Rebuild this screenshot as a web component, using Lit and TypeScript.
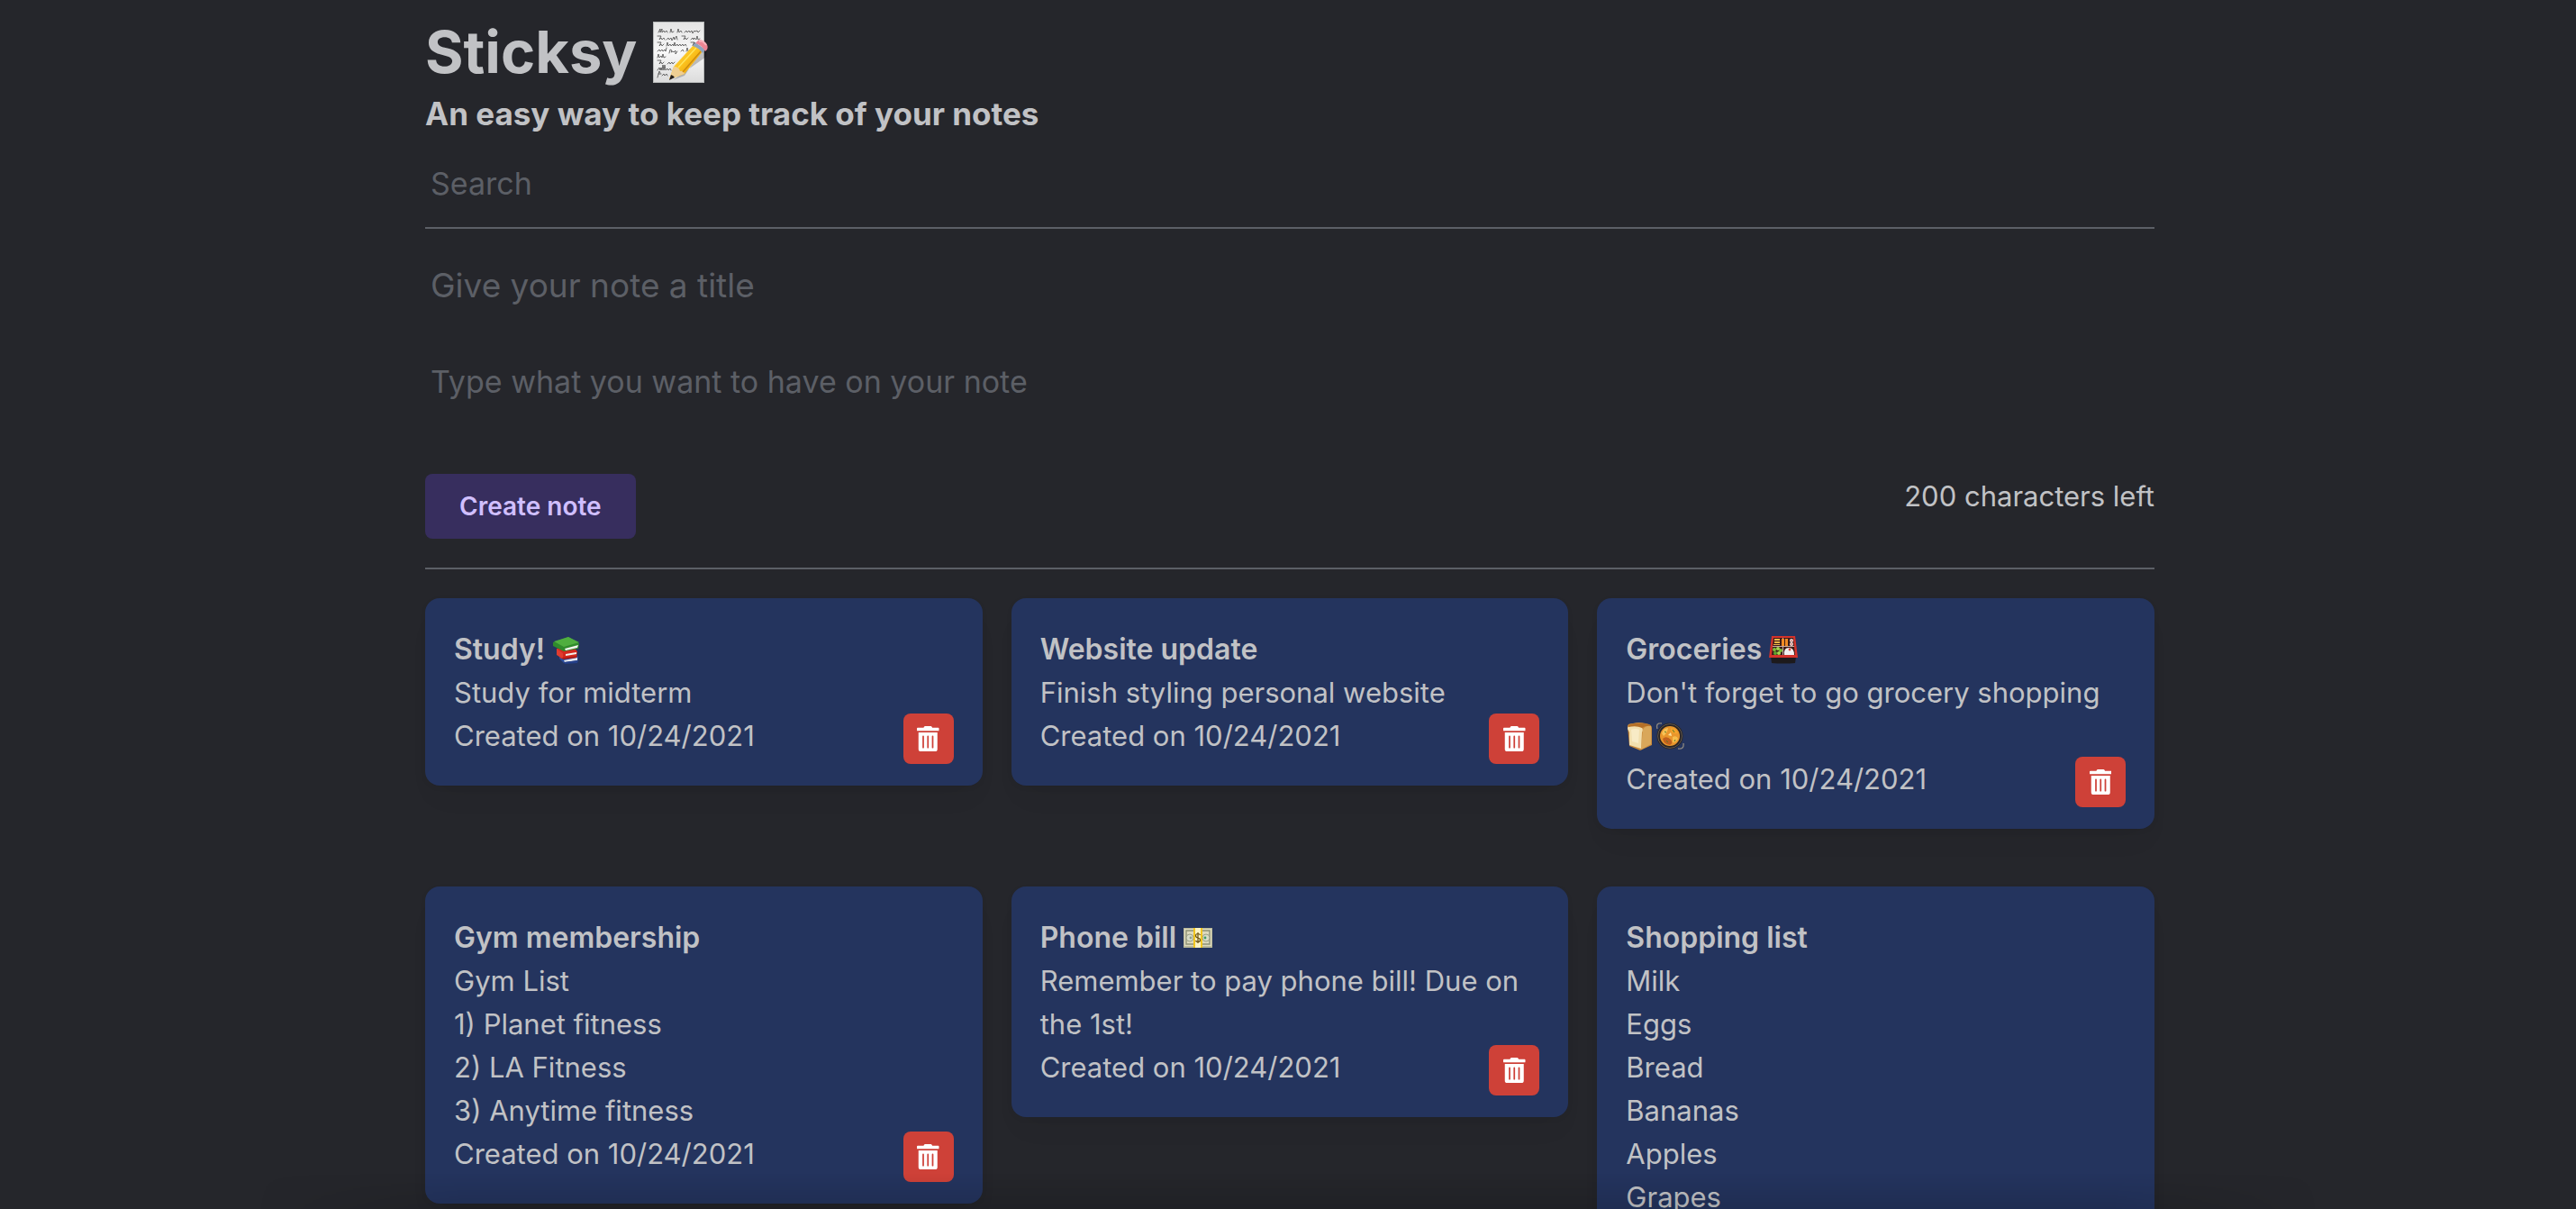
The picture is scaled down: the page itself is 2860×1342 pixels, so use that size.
import { LitElement, html, css, svg, nothing } from "lit";
import { customElement, property, state } from "lit/decorators.js";

interface Note {
  id: number;
  title: string;
  titleIcon?: string;
  lines: string[];
  lineIcons?: string[];
  date: string;
}

const MAX_LENGTH = 200;

const NOTES: Note[] = [
  { id: 1, title: "Study!", titleIcon: "books", lines: ["Study for midterm"], date: "10/24/2021" },
  { id: 2, title: "Website update", lines: ["Finish styling personal website"], date: "10/24/2021" },
  {
    id: 3,
    title: "Groceries",
    titleIcon: "bento",
    lines: ["Don't forget to go grocery shopping"],
    lineIcons: ["bread", "stew"],
    date: "10/24/2021",
  },
  {
    id: 4,
    title: "Gym membership",
    lines: ["Gym List", "1) Planet fitness", "2) LA Fitness", "3) Anytime fitness"],
    date: "10/24/2021",
  },
  {
    id: 5,
    title: "Phone bill",
    titleIcon: "money",
    lines: ["Remember to pay phone bill! Due on the 1st!"],
    date: "10/24/2021",
  },
  {
    id: 6,
    title: "Shopping list",
    lines: ["Milk", "Eggs", "Bread", "Bananas", "Apples", "Grapes"],
    date: "10/24/2021",
  },
];

const PICTURES: Record<string, unknown> = {
  books: svg`
    <path d="M8 20 L22 17 L29 24 L28 30 L13 31 L8 26Z" fill="#2b4c9c"/>
    <path d="M13 28 L28 25 L28 28 L14 30Z" fill="#e6e8ee"/>
    <path d="M13 30 L29 28 L28 31 L14 32Z" fill="#243f88"/>
    <path d="M5 15 L22 12 L28 18 L27 25 L10 26 L5 21Z" fill="#d3291f"/>
    <path d="M5 15 L12 20 L12 26 L5 22Z" fill="#e03c30"/>
    <path d="M15 21 L27 19 L27 21 L15 23Z" fill="#f4f1ec"/>
    <path d="M11 25 L28 23 L27 25 L12 27Z" fill="#b31c15"/>
    <path d="M1 8 L18 2 L30 9 L29 15 L13 18 L1 12Z" fill="#2f8a2c"/>
    <path d="M2 7 L18 2 L30 8 L13 13Z" fill="#4fae3f"/>
    <path d="M14 15 L29 11 L28 14 L15 17Z" fill="#f3f4ee"/>`,
  bento: svg`
    <path d="M2 24H30L29 31Q16 32 3 31Z" fill="#1d1a1c"/>
    <path d="M3 1H29L32 25H0Z" fill="#d4322a"/>
    <path d="M5 3H27L29 22H3Z" fill="#3a1c18"/>
    <path d="M15 3H16V22H15ZM4 12H28V13H4Z" fill="#c9a9a0"/>
    <path d="M6 4H12V6H6ZM6 7H12V9H6ZM5 10H12V11H5Z" fill="#f0b648"/>
    <path d="M14 4H17V12H14ZM18 4H21V12H18Z" fill="#f08a24"/>
    <circle cx="25" cy="6" r="2" fill="#f2dede"/><circle cx="25" cy="10" r="2" fill="#f2dede"/>
    <circle cx="25" cy="6" r=".8" fill="#c8574a"/><circle cx="25" cy="10" r=".8" fill="#c8574a"/>
    <circle cx="6" cy="16" r="2" fill="#7fc03a"/><circle cx="10" cy="15" r="2" fill="#a4d64d"/>
    <circle cx="13" cy="17" r="2" fill="#7fc03a"/><circle cx="7" cy="20" r="2" fill="#5fa32e"/>
    <circle cx="11" cy="20" r="2" fill="#a4d64d"/>
    <path d="M17 22Q16 14 22 14Q28 14 28 22Z" fill="#f3f1f1"/>
    <circle cx="23" cy="16" r="1.4" fill="#d9463c"/>`,
  bread: svg`
    <path d="M2 5Q2 2 8 2Q14 0 22 2Q29 3 29 7V26L16 32L4 27Z" fill="#c98a3c"/>
    <path d="M19 9Q22 4 28 5L28 25L17 31Z" fill="#d9a75a"/>
    <path d="M2 8Q2 4 7 5Q12 4 17 6Q20 8 18 12L17 30L4 26L4 12Z" fill="#f2dfae"/>
    <path d="M3 4Q9 1 20 2Q27 3 28 5Q22 4 18 7Q12 4 3 6Z" fill="#b46f27"/>
    <path d="M6 9Q11 7 15 9L14 24L7 22Z" fill="#f8ebc6"/>`,
  stew: svg`
    <path d="M2 8Q0 1 7 2M25 30Q32 31 31 24" fill="none" stroke="#8a857f" stroke-width="1.4"/>
    <circle cx="16" cy="16" r="14.5" fill="#2a2523"/>
    <circle cx="16" cy="16" r="13.4" fill="none" stroke="#6a6159" stroke-width=".8"/>
    <circle cx="16" cy="16" r="11" fill="#e9962c"/>
    <path d="M7 13Q9 7 14 7Q13 13 9 16Z" fill="#f8c256"/>
    <path d="M17 7Q24 7 25 13Q20 14 17 11Z" fill="#f4a32b"/>
    <path d="M8 19Q12 15 17 20Q20 24 16 26Q9 25 8 19Z" fill="#c0601f"/>
    <path d="M19 17Q24 15 25 19Q23 24 19 23Z" fill="#f7bd4a"/>
    <path d="M14 15L17 12L18 16Z" fill="#fbe3a0"/>
    <path d="M19 9L21 12M12 21L14 23M22 20L21 22M10 11L12 12" stroke="#5c7a26" stroke-width="1"/>`,
  money: svg`
    <path d="M0 5H32V27H0Z" fill="#b9b899"/>
    <path d="M1 6H31V25H1Z" fill="#dcd9bd"/>
    <path d="M3 8H29V23H3Z" fill="none" stroke="#8d9175" stroke-width="1.4"/>
    <circle cx="7" cy="16" r="4" fill="#d8dcc8" stroke="#9aa086"/>
    <circle cx="25" cy="16" r="4" fill="#d8dcc8" stroke="#9aa086"/>
    <circle cx="8" cy="16" r="1.4" fill="#8fa08a"/><circle cx="24" cy="16" r="1.4" fill="#3f9a66"/>
    <path d="M11 5H21V27H11Z" fill="#f2c61f"/>
    <path d="M13 5H19V27H13Z" fill="#fbf3c3"/>
    <path d="M18.5 13Q18 11.5 16 11.5Q13.500 11.500 13.500 13.500Q13.500 15.500 16 16Q18.500 16.500 18.500 18.500Q18.500 20.500 16 20.500Q14 20.500 13.500 19M16 10V22" fill="none" stroke="#6b5312" stroke-width="1.2"/>`,
  memo: svg`
    <defs>
      <linearGradient id="paper" x1="0" y1="0" x2="0" y2="1">
        <stop offset="0" stop-color="#e4e4e4"/><stop offset=".5" stop-color="#f8f8f8"/><stop offset="1" stop-color="#dcdcdc"/>
      </linearGradient>
      <linearGradient id="pencil" x1="0" y1="0" x2="1" y2="1">
        <stop offset="0" stop-color="#ffe04a"/><stop offset=".5" stop-color="#fbc01c"/><stop offset="1" stop-color="#d98a06"/>
      </linearGradient>
    </defs>
    <rect x="2" y="0" width="57" height="68" fill="#b9bbbb"/>
    <rect x="3" y="1" width="55" height="66" fill="url(#paper)"/>
    <g fill="none" stroke="#4a4a4a" stroke-width=".8" stroke-linecap="round" stroke-linejoin="round">
      <path d="M8 12l2-4 0 4 2-4 0 4 2-2 1 2 2-2 1 2 M21 12l1-4 1 4 2-1 M29 12l1-4 1 4 2-2 1 2 M37 12l2-2 1 2 2-2 1 2 2-2 1 3 2-3 1 1 2-1 1 2 2-2"/>
      <path d="M7 16h4l-2 4 2-2 1 2 2-2 1 2 M17 20l2-2 1 2 2-2 1 3 2-4 1 3 2-4 1 4 M34 16h4l-2 4 2-2 1 2 2-2 M44 20l2-2 1 2 1-2 2 2 1-4 1 4 2-1"/>
      <path d="M7 23h4l-2 4 2-2 1 2 2-2 M17 27l1-4 1 4 2-2 1 2 2-2 1 2 1-4 1 4 2-2 1 2 2-2 1 2 2-2 1 2 2-2 1 2 M44 23h4l-2 4 2-4 1 4"/>
      <path d="M7 33l2-2 1 2 2-2 1 2 2-2 1 2 1-4 M20 35l1-4 2 1-1 2 2-1 1 1 2-2 0 4 2-3 M33 33l2-2 1 2 M39 33l1-4 1 4 2-2"/>
      <path d="M7 40l1-4 1 4 2-2 1 2 1-4 1 4 2-1"/>
      <path d="M7 43h4l-2 4 2-2 1 2 2-2 M18 47l2-2 1 2 2-2 1 2 2-2 M30 47l2-2 1 2 1-2"/>
      <path d="M7 54l2-3 1 3 1-3 1 3 1-6 1 6 1-6 1 6 2-2 1 2 2-2 1 2"/>
      <path d="M7 62l2-7 1 2 M8 58h3 M12 60l2-2 1 2 2-2 1 2"/>
    </g>
    <path d="M24 65L61 39L62 29L59 27L37 60L21 66Z" fill="#000" opacity=".22"/>
    <path d="M25 50L47 26L57 33L37 58L20 64Z" fill="url(#pencil)"/>
    <path d="M25 50L20 64L37 58Q36 54 32 55Q31 50 25 50Z" fill="#efcf93"/>
    <path d="M22 59L20 65L26 62Q25 60 22 59Z" fill="#26211f"/>
    <path d="M30 51L50 29" stroke="#ffe55c" stroke-width="1.4"/>
    <path d="M35 56L55 33" stroke="#cf8a0b" stroke-width="1.4"/>
    <path d="M46 27L49 23L60 31L57 35Q53 29 46 27Z" fill="#8ea3bd"/>
    <path d="M49 24L52 21Q55 19 60 23Q64 27 62 31L60 33Q56 26 49 24Z" fill="#ec8593"/>
    <path d="M53 22Q57 20 61 26" fill="none" stroke="#f8b4bc" stroke-width="2"/>`,
};

function picture(name: string, label: string) {
  return html`<svg class="picture" viewBox="0 0 32 32" role="img" aria-label=${label}>${PICTURES[name]}</svg>`;
}

@customElement("note-card")
export class NoteCard extends LitElement {
  @property({ attribute: false }) note!: Note;

  static styles = css`
    :host {
      display: block;
      padding: 33px 32px 24px;
      border-radius: 16px;
      background: #24345e;
      box-shadow: 0 2px 6px rgba(0, 0, 0, 0.05), 0 20px 30px -10px rgba(0, 0, 0, 0.05);
    }
    .title {
      margin: 0;
      font-size: 32px;
      font-weight: 600;
    }
    .line {
      margin: 0;
    }
    .pictures {
      display: flex;
      align-items: center;
      height: 48px;
      gap: 1px;
    }
    .picture {
      width: 32px;
      height: 32px;
      vertical-align: -5px;
    }
    .footer {
      display: flex;
      justify-content: space-between;
      align-items: flex-start;
    }
    .remove {
      display: grid;
      place-items: center;
      width: 56px;
      height: 56px;
      margin: -1px 0 0;
      padding: 0;
      border: 0;
      border-radius: 8px;
      background: #ce4138;
      color: #fff;
      cursor: pointer;
    }
    .trash {
      height: 28px;
      fill: currentColor;
    }
  `;

  private remove() {
    this.dispatchEvent(new CustomEvent("remove-note", { detail: this.note.id, bubbles: true, composed: true }));
  }

  render() {
    const { title, titleIcon, lines, lineIcons, date } = this.note;
    return html`
      <h2 class="title">${title} ${titleIcon ? picture(titleIcon, titleIcon) : nothing}</h2>
      ${lines.map((line) => html`<p class="line">${line}</p>`)}
      ${lineIcons ? html`<div class="pictures">${lineIcons.map((name) => picture(name, name))}</div>` : nothing}
      <div class="footer">
        <span>Created on ${date}</span>
        <button class="remove" type="button" aria-label="Delete note" @click=${this.remove}>
          <svg class="trash" viewBox="0 0 448 512" aria-hidden="true">
            <path d="M32 464a48 48 0 0 0 48 48h288a48 48 0 0 0 48-48V128H32zm272-256a16 16 0 0 1 32 0v224a16 16 0 0 1-32 0zm-96 0a16 16 0 0 1 32 0v224a16 16 0 0 1-32 0zm-96 0a16 16 0 0 1 32 0v224a16 16 0 0 1-32 0zM432 32H312l-9.4-18.7A24 24 0 0 0 281.1 0H166.8a23.72 23.72 0 0 0-21.4 13.3L136 32H16A16 16 0 0 0 0 48v32a16 16 0 0 0 16 16h416a16 16 0 0 0 16-16V48a16 16 0 0 0-16-16z"/>
          </svg>
        </button>
      </div>
    `;
  }
}

@customElement("app-root")
export class AppRoot extends LitElement {
  @state() private notes: Note[] = NOTES;
  @state() private query = "";
  @state() private noteTitle = "";
  @state() private noteText = "";

  static styles = css`
    :host {
      display: block;
      box-sizing: border-box;
      height: 100vh;
      overflow-y: auto;
      scrollbar-width: none;
      padding-left: 4px;
      background: #25262b;
      color: #c1c2c5;
      font-family: Inter, "Liberation Sans", sans-serif;
      font-size: 31px;
      line-height: 48px;
    }
    .page {
      box-sizing: border-box;
      max-width: 1920px;
      margin: 0 auto;
      padding: 14px 0 32px;
    }
    .brand {
      display: flex;
      align-items: center;
      gap: 16px;
      margin: 0;
      font-size: 65px;
      line-height: 88px;
      font-weight: 700;
    }
    .memo {
      width: 64px;
      height: 68px;
    }
    .tagline {
      margin: 0;
      font-size: 35px;
      font-weight: 700;
    }
    .field {
      display: block;
      box-sizing: border-box;
      width: 100%;
      padding: 0 6px;
      border: 0;
      outline: 0;
      background: none;
      color: inherit;
      font: inherit;
      font-size: 34px;
      resize: none;
    }
    .field::placeholder {
      color: #5c5f66;
      opacity: 1;
    }
    .search {
      height: 104px;
      padding-top: 4px;
      border-bottom: 2px solid #5c5f66;
    }
    .editor {
      padding: 22px 0 32px;
      border-bottom: 2px solid #5c5f66;
    }
    .name {
      height: 80px;
      font-size: 37px;
    }
    .text {
      height: 126px;
      margin: 44px 0 0;
    }
    .actions {
      display: flex;
      justify-content: space-between;
      align-items: flex-start;
    }
    .create {
      height: 72px;
      padding: 0 38px;
      border: 0;
      border-radius: 8px;
      background: #372e5e;
      color: #d0bfff;
      font: inherit;
      font-size: 28px;
      font-weight: 600;
      cursor: pointer;
    }
    .count {
      padding-top: 1px;
    }
    .notes {
      display: grid;
      grid-template-columns: repeat(3, 1fr);
      align-items: start;
      gap: 64px 32px;
      padding-top: 32px;
    }
    .shade {
      position: fixed;
      inset: auto 10% 0;
      height: 40px;
      background: linear-gradient(transparent, rgba(0, 0, 0, 0.12));
      mask-image: linear-gradient(90deg, transparent, #000 10%, #000 90%, transparent);
      pointer-events: none;
    }
  `;

  private value(event: Event) {
    return (event.target as HTMLInputElement | HTMLTextAreaElement).value;
  }

  private create() {
    if (!this.noteText.trim()) return;
    const note: Note = {
      id: Date.now(),
      title: this.noteTitle,
      lines: this.noteText.split("\n"),
      date: new Date().toLocaleDateString("en-US"),
    };
    this.notes = [...this.notes, note];
    this.noteTitle = "";
    this.noteText = "";
  }

  private removeNote(event: CustomEvent<number>) {
    this.notes = this.notes.filter((note) => note.id !== event.detail);
  }

  render() {
    const query = this.query.toLowerCase();
    const shown = this.notes.filter((note) => [note.title, ...note.lines].join(" ").toLowerCase().includes(query));
    return html`
      <main class="page">
        <h1 class="brand">
          Sticksy
          <svg class="memo" viewBox="0 0 64 68" role="img" aria-label="memo">${PICTURES.memo}</svg>
        </h1>
        <p class="tagline">An easy way to keep track of your notes</p>
        <input
          class="field search"
          type="text"
          aria-label="Search"
          placeholder="Search"
          .value=${this.query}
          @input=${(e: Event) => (this.query = this.value(e))}
        />
        <section class="editor">
          <input
            class="field name"
            type="text"
            aria-label="Note title"
            placeholder="Give your note a title"
            .value=${this.noteTitle}
            @input=${(e: Event) => (this.noteTitle = this.value(e))}
          />
          <textarea
            class="field text"
            aria-label="Note text"
            placeholder="Type what you want to have on your note"
            maxlength=${MAX_LENGTH}
            .value=${this.noteText}
            @input=${(e: Event) => (this.noteText = this.value(e))}
          ></textarea>
          <div class="actions">
            <button class="create" type="button" @click=${this.create}>Create note</button>
            <span class="count">${MAX_LENGTH - this.noteText.length} characters left</span>
          </div>
        </section>
        <section class="notes" @remove-note=${this.removeNote}>
          ${shown.map((note) => html`<note-card .note=${note}></note-card>`)}
        </section>
      </main>
      <div class="shade"></div>
    `;
  }
}
